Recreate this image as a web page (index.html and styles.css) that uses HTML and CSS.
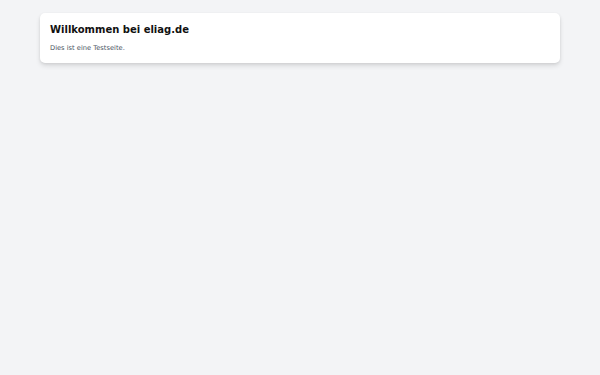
FILE: index.html
```html
<!DOCTYPE html>
<html lang="de">
<head>
  <meta charset="UTF-8">
  <meta name="viewport" content="width=device-width, initial-scale=1.0">
  <title>eliag.de</title>
  <link rel="stylesheet" href="styles.css">
</head>
<body>
<div class="container">
  <div class="card">
    <h1>Willkommen bei eliag.de</h1>
    <p>Dies ist eine Testseite.</p>
  </div>
</div>
</body>
</html>
```

FILE: styles.css
```css
html, body {
  height: 100%;
}
body {
  font-family: 'DejaVu Sans', sans-serif;
  background-color: #f3f4f6;
  margin: 0;
}
.container {
  max-width: 520px;
  margin: 0 auto;
  padding-top: 13px;
}
.card {
  background-color: #ffffff;
  border-radius: 5px;
  box-shadow: 0 3px 5px rgba(0, 0, 0, 0.1), 0 1px 3px rgba(0, 0, 0, 0.08);
  padding: 10px 10px 10px;
}
h1 {
  margin: 0;
  font-size: 10px;
  line-height: 13px;
  color: #111111;
}
p {
  margin: 7px 0 0;
  font-size: 6.7px;
  line-height: 10px;
  color: #4b5563;
}
```
